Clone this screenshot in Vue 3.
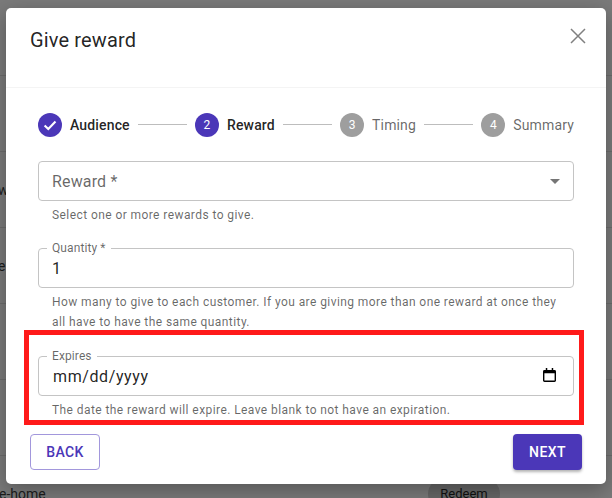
<script setup>
const rows = ['', 'w', 'e', '', '']
const steps = [
  { n: 1, label: 'Audience', state: 'done' },
  { n: 2, label: 'Reward', state: 'active' },
  { n: 3, label: 'Timing', state: 'idle' },
  { n: 4, label: 'Summary', state: 'idle' },
]
</script>

<template>
  <div class="page">
    <div class="backdrop">
      <div v-for="(r, i) in rows" :key="i" class="row"><span class="rowtext">{{ r }}</span></div>
      <div class="row">
        <span class="home">e-home</span>
        <span class="chip">Redeem</span>
      </div>
    </div>

    <div class="dialog">
      <header class="head">
        <h2 class="title">Give reward</h2>
        <svg class="close" viewBox="0 0 24 24" width="24" height="24">
          <path d="M5 5 19 19M19 5 5 19" fill="none" stroke="#808080" stroke-width="1.500" />
        </svg>
      </header>

      <div class="content">
        <div class="stepper">
          <template v-for="(s, i) in steps" :key="s.n">
            <div v-if="i > 0" class="line"></div>
            <div class="step">
              <svg v-if="s.state === 'done'" class="ico" viewBox="0 0 24 24" width="24" height="24">
                <circle cx="12" cy="12" r="12" fill="#4b37b8" />
                <path d="M6.600 12.400 10.300 16 17.500 8.600" fill="none" stroke="#fff" stroke-width="2.100" />
              </svg>
              <span v-else class="num" :class="s.state">{{ s.n }}</span>
              <span class="lab" :class="s.state">{{ s.label }}</span>
            </div>
          </template>
        </div>

        <div class="field f-select">
          <div class="box"><span class="ph">Reward *</span>
            <span class="caret"></span>
          </div>
          <p class="help">Select one or more rewards to give.</p>
        </div>

        <div class="field f-qty">
          <div class="box">
            <span class="legend">Quantity *</span>
            <span class="val">1</span>
          </div>
          <p class="help">How many to give to each customer. If you are giving more than one reward at once they all have to have the same quantity.</p>
        </div>

        <div class="field f-exp">
          <div class="box">
            <span class="legend">Expires</span>
            <span class="val date">mm/dd/yyyy</span>
            <svg class="cal" viewBox="0 0 14 15" width="13" height="14">
              <path d="M3 0h1.600v2h4.800V0H11v2h1.400A1.600 1.600 0 0 1 14 3.600v9.800a1.600 1.600 0 0 1-1.600 1.600H1.600A1.600 1.600 0 0 1 0 13.400V3.600A1.600 1.600 0 0 1 1.600 2H3zM1.500 5.500v8h11v-8z" fill="#000" />
            </svg>
          </div>
          <p class="help">The date the reward will expire. Leave blank to not have an expiration.</p>
        </div>
      </div>

      <footer class="actions">
        <button class="btn back">BACK</button>
        <button class="btn next">NEXT</button>
      </footer>
    </div>

    <div class="redbox"></div>
  </div>
</template>

<style scoped>
.page {
  position: relative;
  width: 612px;
  height: 498px;
  overflow: hidden;
  background: #7a7a7a;
  font-family: Roboto, sans-serif;
}
.backdrop { display: flex; flex-direction: column; padding-top: 75px; }
.row {
  flex: none;
  height: 76px;
  border-top: 1px solid #6c6c6c;
  box-sizing: border-box;
  display: flex;
  align-items: center;
  font-size: 14px;
  color: #1c1c1c;
}
.rowtext { margin-left: -2px; }
.home { margin-left: -1px; }
.chip {
  margin-left: auto;
  margin-right: 112px;
  width: 72px;
  height: 32px;
  border-radius: 16px;
  background: #666;
  font-size: 13px;
  color: #111;
  display: flex;
  align-items: center;
  justify-content: center;
}
.dialog {
  position: absolute;
  left: 6px;
  top: 8px;
  width: 600px;
  height: 476px;
  box-sizing: border-box;
  background: #fff;
  border-radius: 5px;
  display: flex;
  flex-direction: column;
  box-shadow: 0 6px 20px rgba(0, 0, 0, .3);
}
.head {
  height: 80px;
  box-sizing: border-box;
  border-bottom: 1px solid #f4f4f4;
  display: flex;
  justify-content: space-between;
  padding: 16px 16px 0 24px;
}
.title {
  margin: 0;
  font-size: 20px;
  font-weight: 400;
  line-height: 32px;
  letter-spacing: .15px;
  color: rgba(0, 0, 0, .87);
}
.content { flex: 1; padding: 25px 32px 0; }
.stepper { display: flex; align-items: center; height: 24px; }
.step { display: flex; align-items: center; gap: 8px; }
.line { flex: 1; height: 1px; background: #bdbdbd; margin: 0 8px 1px; }
.num {
  width: 24px;
  height: 24px;
  border-radius: 50%;
  display: flex;
  align-items: center;
  justify-content: center;
  font-size: 12px;
  color: #fff;
  background: #9e9e9e;
}
.num.active { background: #4b37b8; }
.lab { font-size: 14px; letter-spacing: .15px; color: rgba(0, 0, 0, .6); }
.lab.done, .lab.active { font-weight: 500; color: rgba(0, 0, 0, .87); }
.box {
  position: relative;
  display: flex;
  align-items: center;
  height: 40px;
  box-sizing: border-box;
  border: 1px solid #c4c4c4;
  border-radius: 4px;
  padding: 0 13px;
}
.legend {
  position: absolute;
  left: 8px;
  top: -8px;
  padding: 0 5px;
  background: #fff;
  font-size: 12px;
  line-height: 14px;
  letter-spacing: .1px;
  color: rgba(0, 0, 0, .6);
}
.f-select { margin-top: 24px; }
.f-qty { margin-top: 23px; }
.f-exp { margin-top: 24px; }
.ph { font-size: 16px; letter-spacing: .15px; color: rgba(0, 0, 0, .6); }
.val { font-size: 16px; letter-spacing: .15px; color: rgba(0, 0, 0, .87); }
.date { letter-spacing: .6px; margin-left: 1px; }
.caret {
  position: absolute;
  right: 13px;
  top: 17px;
  border-left: 5px solid transparent;
  border-right: 5px solid transparent;
  border-top: 5px solid #757575;
}
.cal { position: absolute; right: 17px; top: 11px; }
.help {
  margin: 4px 0 0;
  padding: 0 14px;
  font-size: 12px;
  line-height: 20px;
  letter-spacing: .42px;
  color: rgba(0, 0, 0, .6);
}
.actions {
  display: flex;
  justify-content: space-between;
  padding: 0 24px 14px;
}
.btn {
  height: 36px;
  border-radius: 4px;
  font-family: Roboto, sans-serif;
  font-size: 14px;
  font-weight: 500;
  letter-spacing: .4px;
  box-sizing: border-box;
}
.back { width: 70px; background: #fff; color: #4b37b8; border: 1px solid #a297dc; }
.next {
  width: 69px;
  background: #4b37b8;
  color: #fff;
  border: 0;
  box-shadow: 0 2px 3px rgba(0, 0, 0, .3);
}
.redbox {
  position: absolute;
  left: 24px;
  top: 330px;
  width: 560px;
  height: 95px;
  box-sizing: border-box;
  border: 5px solid #ff1a1a;
}
</style>
